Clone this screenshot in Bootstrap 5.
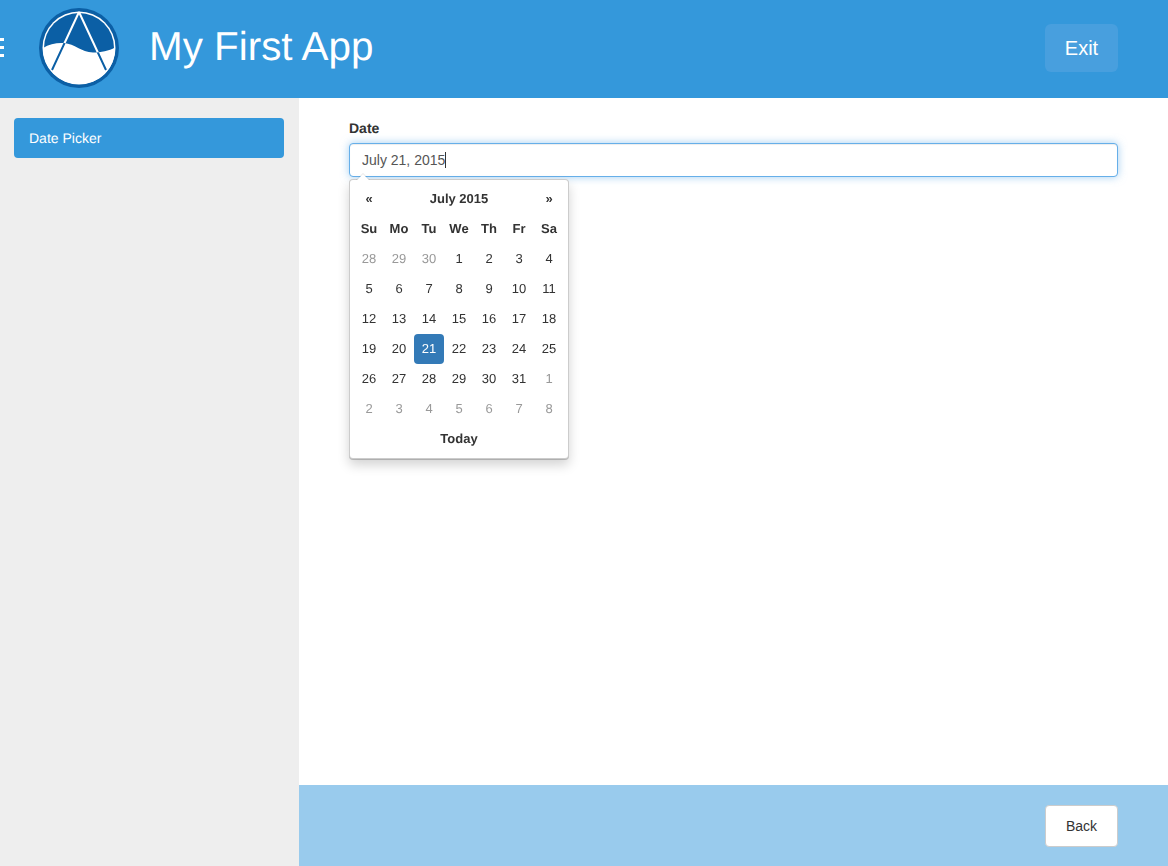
<!DOCTYPE html>
<html lang="en">
<head>
    <meta charset="UTF-8">
    <meta name="viewport" content="width=device-width, initial-scale=1.0">
    <title>My First App</title>
    <link href="https://cdn.jsdelivr.net/npm/bootstrap@5.3.0/dist/css/bootstrap.min.css" rel="stylesheet">
    <style>
        html, body { height: 100%; }
        body { font-family: "Liberation Sans", Arial, sans-serif; font-size: 14px; line-height: 20px; color: #333; overflow: hidden; text-rendering: geometricPrecision; }
        .app-shell { height: 866px; }
        .app-top { height: 98px; padding-bottom: 2px; background: #3498db; color: #fff; }
        .menu-bars { width: 4px; height: 19px; margin-right: 35px; margin-top: -2px; border-top: 3px solid #fff; border-bottom: 3px solid #fff; position: relative; }
        .menu-bars::after { content: ""; position: absolute; left: 0; right: 0; top: 5px; height: 3px; background: #fff; }
        .app-logo { width: 80px; height: 80px; margin-right: 30px; }
        .app-title { font-size: 40.4px; line-height: 46px; font-weight: 400; margin: 0 0 4px; text-rendering: geometricPrecision; }
        .exit-btn { width: 73px; height: 48px; margin: 0 50px 0 0; background: #489fde; color: #fff; border: 0; border-radius: 6px; font-size: 20px; padding: 0; }
        .exit-btn:hover { background: #489fde; color: #fff; }
        .side-pane { width: 299px; background: #eee; padding: 20px 15px 0 14px; }
        .side-item { display: block; height: 40px; line-height: 40px; padding: 0 15px; background: #3498db; color: #fff; border-radius: 4px; text-decoration: none; }
        .side-item:hover { color: #fff; }
        .form-pane { padding: 20px 50px 0; position: relative; }
        .date-label { display: block; font-weight: 700; margin-bottom: 5px; line-height: 20px; height: 20px; }
        .date-input { height: 34px; padding: 6px 12px; font-size: 14px; line-height: 20px; color: #555; border: 1px solid #66afe9; border-radius: 4px; box-shadow: inset 0 1px 1px rgba(0,0,0,.075), 0 0 8px rgba(102,175,233,.6); }
        .date-input:focus { color: #555; border-color: #66afe9; box-shadow: inset 0 1px 1px rgba(0,0,0,.075), 0 0 8px rgba(102,175,233,.6); }
        .text-caret { position: absolute; left: 96px; top: 9px; width: 1px; height: 16px; background: #333; }
        .cal-pop { position: absolute; left: 50px; top: 81px; width: 220px; height: 280px; padding: 4px; background: #fff; border: 1px solid rgba(0,0,0,.2); border-radius: 4px; box-shadow: 0 1px 0 rgba(0,0,0,.2), 0 6px 12px rgba(0,0,0,.175); }
        .cal-pop::before { content: ""; position: absolute; top: -7px; left: 6px; border-left: 7px solid transparent; border-right: 7px solid transparent; border-bottom: 7px solid rgba(0,0,0,.1); }
        .cal-pop::after { content: ""; position: absolute; top: -6px; left: 7px; border-left: 6px solid transparent; border-right: 6px solid transparent; border-bottom: 6px solid #fff; }
        .cal-grid { display: grid; grid-template-columns: repeat(7, 30px); grid-auto-rows: 30px; font-size: 13px; }
        .cal-grid > div { display: flex; align-items: center; justify-content: center; border-radius: 4px; }
        .cal-head { font-weight: 700; }
        .cal-wide { grid-column: span 5; }
        .cal-all { grid-column: span 7; }
        .cal-off { color: #999; }
        .cal-grid > .cal-on { background: #337ab7; color: #fff; }
        .bottom-bar { height: 81px; background: #99cbed; padding-right: 50px; }
        .back-btn { width: 73px; height: 42px; padding: 1px 0 0; font-size: 14px; color: #333; background: #fff; border: 1px solid #ccc; border-radius: 4px; }
    </style>
</head>
<body>
    <div class="app-shell d-flex flex-column">
        <!-- Header -->
        <header class="app-top d-flex align-items-center flex-shrink-0">
            <div class="menu-bars"></div>
            <svg class="app-logo" viewBox="0 0 80 80" xmlns="http://www.w3.org/2000/svg">
                <defs>
                    <clipPath id="waterClip">
                        <path d="M0 40 L4 40 C10 36 18 34.500 25 35 C36 36 42 44 54 44.500 C62 44.500 70 43 76 39.500 L80 39.500 L80 80 L0 80 Z"/>
                    </clipPath>
                </defs>
                <circle cx="40" cy="40" r="40" fill="#0b5fa5"/>
                <circle cx="40" cy="40" r="36.500" fill="#fff"/>
                <circle cx="40" cy="40" r="35" fill="#0b5fa5"/>
                <path d="M4 40 C10 36 18 34.500 25 35 C36 36 42 44 54 44.500 C62 44.500 70 43 76 39.500 C76 62 60 76 40 76 C20 76 4 60 4 40 Z" fill="#fff"/>
                <path d="M40 4 L13 62 M40 4 L67 62" stroke="#fff" stroke-width="2" fill="none"/>
                <path d="M40 4 L13 62 M40 4 L67 62" stroke="#0b5fa5" stroke-width="2" fill="none" clip-path="url(#waterClip)"/>
            </svg>
            <h1 class="app-title flex-grow-1">My First App</h1>
            <button class="btn exit-btn" type="button">Exit</button>
        </header>

        <div class="d-flex flex-grow-1">
            <!-- Side menu -->
            <aside class="side-pane flex-shrink-0">
                <a href="#" class="side-item">Date Picker</a>
            </aside>

            <div class="d-flex flex-column flex-grow-1">
                <main class="form-pane flex-grow-1">
                    <label class="date-label" for="dateField">Date</label>
                    <div class="position-relative">
                        <input id="dateField" class="form-control date-input" type="text" value="July 21, 2015">
                        <span class="text-caret"></span>
                    </div>

                    <div class="cal-pop">
                        <div class="cal-grid" id="calGrid"></div>
                    </div>
                </main>

                <footer class="bottom-bar d-flex align-items-center justify-content-end flex-shrink-0">
                    <button class="btn back-btn" type="button">Back</button>
                </footer>
            </div>
        </div>
    </div>

    <script src="https://cdn.jsdelivr.net/npm/bootstrap@5.3.0/dist/js/bootstrap.bundle.min.js"></script>
    <script>
        // Build the calendar cells
        const grid = document.getElementById('calGrid');

        function addCell(text, cls) {
            const cell = document.createElement('div');
            cell.textContent = text;
            if (cls) cell.className = cls;
            grid.appendChild(cell);
        }

        addCell('«', 'cal-head');
        addCell('July 2015', 'cal-head cal-wide');
        addCell('»', 'cal-head');
        ['Su', 'Mo', 'Tu', 'We', 'Th', 'Fr', 'Sa'].forEach(d => addCell(d, 'cal-head'));

        [28, 29, 30].forEach(d => addCell(d, 'cal-off'));
        for (let d = 1; d <= 31; d++) addCell(d, d === 21 ? 'cal-on' : '');
        for (let d = 1; d <= 8; d++) addCell(d, 'cal-off');

        addCell('Today', 'cal-head cal-all');

        document.getElementById('dateField').focus();
    </script>
</body>
</html>
